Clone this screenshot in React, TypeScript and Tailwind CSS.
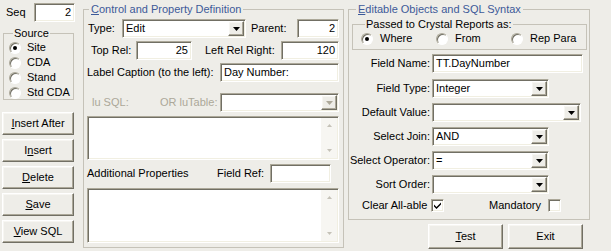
import React from 'react';

const sunken =
  'border border-t-[#aca899] border-l-[#aca899] border-b-white border-r-white shadow-[inset_1px_1px_0_#716f64,inset_-1px_-1px_0_#f1efe2]';
const raised =
  'border border-t-white border-l-white border-b-[#716f64] border-r-[#716f64] shadow-[inset_-1px_-1px_0_#aca899,inset_1px_1px_0_#f7f6f2]';

function TextBox({ className = '', value = '', right = false }: { className?: string; value?: string; right?: boolean }) {
  return (
    <div className={`${sunken} bg-white h-[19px] flex items-center px-[3px] ${right ? 'justify-end' : ''} ${className}`}>
      <span>{value}</span>
    </div>
  );
}

function Combo({ className = '', value = '', disabled = false }: { className?: string; value?: string; disabled?: boolean }) {
  return (
    <div className={`${sunken} bg-white h-[19px] flex items-stretch p-[1px] ${className}`}>
      <span className="flex-1 flex items-center pl-[2px] truncate">{value}</span>
      <span className={`${raised} w-[16px] bg-[#eeede8] flex items-center justify-center`}>
        <svg width="7" height="4" viewBox="0 0 7 4">
          <path d="M0 0h7L3.5 4z" fill={disabled ? '#aca899' : '#000'} />
        </svg>
      </span>
    </div>
  );
}

function Memo({ className = '' }: { className?: string }) {
  return (
    <div className={`${sunken} bg-white flex justify-end p-[1px] ${className}`}>
      <div className="w-[16px] bg-[#f7f6f2] flex flex-col justify-between items-center py-[6px]">
        <svg width="5" height="3" viewBox="0 0 5 3">
          <path d="M2.5 0L5 3H0z" fill="#c5c2b8" />
        </svg>
        <svg width="5" height="3" viewBox="0 0 5 3">
          <path d="M0 0h5L2.5 3z" fill="#c5c2b8" />
        </svg>
      </div>
    </div>
  );
}

function Radio({ checked = false }: { checked?: boolean }) {
  return (
    <span className="w-[12px] h-[12px] shrink-0 rounded-full bg-white border border-t-[#aca899] border-l-[#aca899] border-b-white border-r-white shadow-[inset_1px_1px_0_#716f64] flex items-center justify-center">
      {checked && <span className="w-[4px] h-[4px] rounded-full bg-black" />}
    </span>
  );
}

function Check({ checked = false }: { checked?: boolean }) {
  return (
    <span className={`${sunken} w-[13px] h-[13px] bg-white flex items-center justify-center`}>
      {checked && (
        <svg width="7" height="7" viewBox="0 0 7 7">
          <path d="M0 2.5l2.5 2.5L7 0.5v2L2.5 7 0 4.5z" fill="#000" />
        </svg>
      )}
    </span>
  );
}

function Button({ children, className = '' }: { children: React.ReactNode; className?: string }) {
  return (
    <div className={`${raised} bg-[#eeede8] flex items-center justify-center ${className}`}>
      <span>{children}</span>
    </div>
  );
}

export default function App() {
  return (
    <div className="w-[611px] h-[251px] bg-[#eeede8] flex overflow-hidden text-[11px] leading-[13px] text-black font-['Liberation_Sans',Arial,sans-serif]">
      {/* left column */}
      <div className="w-[83px] pl-[2px] flex flex-col">
        <div className="mt-[3px] h-[19px] flex items-center">
          <span className="w-[32px] pl-[4px]">Seq</span>
          <TextBox className="w-[41px]" value="2" right />
        </div>
        <fieldset className="mt-[5px] ml-[1px] w-[71px] h-[73px] border border-[#c5c2b8] pl-[5px]">
          <legend className="ml-[4px] px-[1px]">Source</legend>
          {['Site', 'CDA', 'Stand', 'Std CDA'].map((s, i) => (
            <div key={s} className="h-[15px] flex items-center">
              <Radio checked={i === 0} />
              <span className="ml-[6px]">{s}</span>
            </div>
          ))}
        </fieldset>
        <div className="mt-[12px] flex flex-col gap-[4px]">
          <Button className="w-[72px] h-[23px]"><u>I</u>nsert After</Button>
          <Button className="w-[72px] h-[23px]">I<u>n</u>sert</Button>
          <Button className="w-[72px] h-[23px]"><u>D</u>elete</Button>
          <Button className="w-[72px] h-[23px]"><u>S</u>ave</Button>
          <Button className="w-[72px] h-[23px]"><u>V</u>iew SQL</Button>
        </div>
      </div>

      {/* middle group */}
      <fieldset className="mt-[3px] w-[261px] h-[245px] border border-[#c5c2b8] flex flex-col">
        <legend className="ml-[5px] px-[2px] text-[#3d5a99]"><u>C</u>ontrol and Property Definition</legend>
        <div className="mt-[3px] h-[19px] flex items-center pl-[4px]">
          <span className="w-[34px]">Type:</span>
          <Combo className="w-[124px]" value="Edit" />
          <span className="ml-[5px] w-[46px]">Parent:</span>
          <TextBox className="w-[42px]" value="2" right />
        </div>
        <div className="mt-[3px] h-[19px] flex items-center pl-[7px]">
          <span className="w-[45px]">Top Rel:</span>
          <TextBox className="w-[56px]" value="25" right />
          <span className="ml-[13px] w-[76px]">Left Rel Right:</span>
          <TextBox className="w-[58px]" value="120" right />
        </div>
        <div className="mt-[3px] h-[19px] flex items-center pl-[3px]">
          <span className="w-[133px]">Label Caption (to the left):</span>
          <TextBox className="w-[119px]" value="Day Number:" />
        </div>
        <div className="mt-[11px] h-[19px] flex items-center pl-[8px] text-[#aca899]">
          <span className="w-[68px]">lu SQL:</span>
          <span className="w-[60px]">OR luTable:</span>
          <Combo className="w-[119px]" disabled />
        </div>
        <Memo className="mt-[4px] ml-[3px] w-[252px] h-[44px]" />
        <div className="mt-[4px] h-[19px] flex items-center pl-[3px]">
          <span className="w-[130px]">Additional Properties</span>
          <span className="w-[53px]">Field Ref:</span>
          <TextBox className="w-[61px]" />
        </div>
        <Memo className="mt-[5px] ml-[3px] w-[252px] h-[55px]" />
      </fieldset>

      {/* right column */}
      <div className="ml-[4px] flex flex-col">
        <fieldset className="mt-[3px] w-[242px] h-[217px] border border-[#c5c2b8] flex flex-col">
          <legend className="ml-[7px] px-[2px] text-[#3d5a99]"><u>E</u>ditable Objects and SQL Syntax</legend>
          <fieldset className="mt-[2px] ml-[3px] w-[232px] h-[32px] border border-[#c5c2b8] flex items-center pl-[8px]">
            <legend className="ml-[4px] px-[1px]">Passed to Crystal Reports as:</legend>
            {['Where', 'From', 'Rep Para'].map((s, i) => (
              <div key={s} className="w-[75px] h-[15px] flex items-center">
                <Radio checked={i === 0} />
                <span className="ml-[7px]">{s}</span>
              </div>
            ))}
          </fieldset>
          <div className="mt-[4px] h-[19px] flex items-center">
            <span className="w-[83px] pr-[2px] text-right">Field Name:</span>
            <TextBox className="w-[151px]" value="TT.DayNumber" />
          </div>
          <div className="mt-[6px] flex flex-col gap-[5px]">
            {[
              ['Field Type:', 'Integer', 'w-[117px]'],
              ['Default Value:', '', 'w-[149px]'],
              ['Select Join:', 'AND', 'w-[117px]'],
              ['Select Operator:', '=', 'w-[117px]'],
              ['Sort Order:', '', 'w-[117px]'],
            ].map(([label, val, w]) => (
              <div key={label} className="h-[19px] flex items-center">
                <span className="w-[83px] pr-[2px] text-right whitespace-nowrap">{label}</span>
                <Combo className={w} value={val} />
              </div>
            ))}
          </div>
          <div className="mt-[5px] h-[13px] flex items-center pl-[13px]">
            <span className="w-[69px]">Clear All-able</span>
            <Check checked />
            <span className="ml-[45px] w-[59px]">Mandatory</span>
            <Check />
          </div>
        </fieldset>
        <div className="mt-[4px] ml-[80px] flex gap-[5px]">
          <Button className="w-[75px] h-[25px]"><u>T</u>est</Button>
          <Button className="w-[75px] h-[25px]">Exit</Button>
        </div>
      </div>
    </div>
  );
}
